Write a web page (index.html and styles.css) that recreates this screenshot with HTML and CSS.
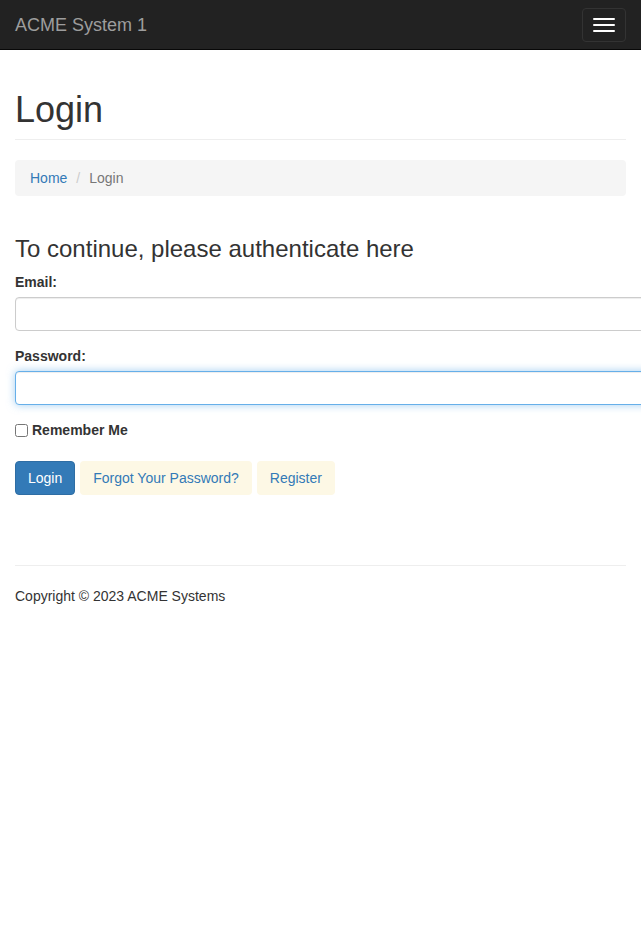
FILE: index.html
```html
<!DOCTYPE html>
<html lang="en">
<head>
<meta charset="utf-8">
<title>Login - ACME System 1</title>
<link rel="stylesheet" href="styles.css">
</head>
<body>
<nav class="navbar">
  <div class="navbar-inner">
    <a class="navbar-brand" href="#">ACME System 1</a>
    <button class="navbar-toggle" type="button" aria-label="Toggle navigation">
      <span class="icon-bar"></span>
      <span class="icon-bar"></span>
      <span class="icon-bar"></span>
    </button>
  </div>
</nav>
<div class="container">
  <div class="page-header">
    <h1>Login</h1>
  </div>
  <ol class="breadcrumb">
    <li><a href="#">Home</a></li>
    <li class="sep">/</li>
    <li class="active">Login</li>
  </ol>
  <h3 class="lead-title">To continue, please authenticate here</h3>
  <form class="login-form">
    <div class="form-group">
      <label class="control-label" for="email">Email:</label>
      <input class="form-control" id="email" type="email">
    </div>
    <div class="form-group">
      <label class="control-label" for="password">Password:</label>
      <input class="form-control focused" id="password" type="password">
    </div>
    <div class="checkbox">
      <label><input type="checkbox" class="check"> Remember Me</label>
    </div>
    <div class="actions">
      <button class="btn btn-primary" type="button">Login</button>
      <a class="btn btn-link" href="#">Forgot Your Password?</a>
      <a class="btn btn-link" href="#">Register</a>
    </div>
  </form>
  <footer class="footer">
    <hr class="rule">
    <p class="copyright">Copyright © 2023 ACME Systems</p>
  </footer>
</div>
</body>
</html>
```
FILE: styles.css
```css
html, body {
  margin: 0;
  padding: 0;
}
body {
  font-family: "Liberation Sans", Arial, sans-serif;
  font-size: 14px;
  line-height: 20px;
  color: #333;
  background: #fff;
}
a {
  color: #337ab7;
  text-decoration: none;
}
.navbar {
  background: #222;
  border-bottom: 1px solid #080808;
  height: 50px;
  box-sizing: border-box;
  margin-bottom: 30px;
}
.navbar-inner {
  display: flex;
  justify-content: space-between;
  align-items: flex-start;
  height: 49px;
}
.navbar-brand {
  color: #9d9d9d;
  font-size: 18px;
  line-height: 20px;
  padding: 15px;
}
.navbar-toggle {
  margin: 8px 15px 0 0;
  padding: 9px 10px;
  width: 44px;
  height: 34px;
  box-sizing: border-box;
  background: #222;
  border: 1px solid #333;
  border-radius: 4px;
  display: flex;
  flex-direction: column;
  gap: 4px;
  cursor: pointer;
}
.icon-bar {
  display: block;
  width: 22px;
  height: 2px;
  background: #fff;
  border-radius: 1px;
}
.container {
  padding: 0 15px;
}
.page-header {
  border-bottom: 1px solid #eee;
  padding-bottom: 9px;
  margin-bottom: 20px;
}
.page-header h1 {
  margin: 0;
  font-size: 36px;
  font-weight: 500;
  line-height: 39.6px;
  padding-top: 10px;
}
.breadcrumb {
  list-style: none;
  margin: 0 0 40px;
  padding: 8px 15px;
  background: #f5f5f5;
  border-radius: 4px;
  display: flex;
}
.breadcrumb .sep {
  color: #ccc;
  padding: 0 9px;
}
.breadcrumb .active {
  color: #777;
}
.lead-title {
  font-size: 24px;
  font-weight: 500;
  line-height: 26.4px;
  margin: 0 0 10px;
}
.login-form {
  width: 1008px;
}
.form-group {
  margin-bottom: 15px;
}
.control-label {
  display: inline-block;
  font-weight: bold;
  margin-bottom: 5px;
}
.form-control {
  display: block;
  width: 100%;
  height: 34px;
  box-sizing: border-box;
  padding: 6px 12px;
  font: inherit;
  color: #555;
  background: #fff;
  border: 1px solid #ccc;
  border-radius: 4px;
  box-shadow: inset 0 1px 1px rgba(0,0,0,.075);
  outline: none;
}
.form-control.focused {
  border-color: #66afe9;
  box-shadow: inset 0 1px 1px rgba(0,0,0,.075), 0 0 8px rgba(102,175,233,.6);
}
.checkbox {
  margin: 1px 0 19px;
}
.checkbox label {
  font-weight: bold;
  display: inline-flex;
  align-items: center;
}
.check {
  margin: 0 4px 0 0;
  width: 13px;
  height: 13px;
}
.actions {
  display: flex;
  gap: 5px;
  margin-bottom: 70px;
}
.btn {
  display: inline-block;
  height: 34px;
  box-sizing: border-box;
  padding: 6px 12px;
  font: inherit;
  line-height: 20px;
  border: 1px solid transparent;
  border-radius: 4px;
  cursor: pointer;
}
.btn-primary {
  color: #fff;
  background: #337ab7;
  border-color: #2e6da4;
}
.btn-link {
  color: #337ab7;
  background: #fdf8e5;
}
.footer {
  width: 611px;
}
.rule {
  margin: 0 0 20px;
  border: 0;
  border-top: 1px solid #eee;
}
.copyright {
  margin: 0 0 10px;
}
```
